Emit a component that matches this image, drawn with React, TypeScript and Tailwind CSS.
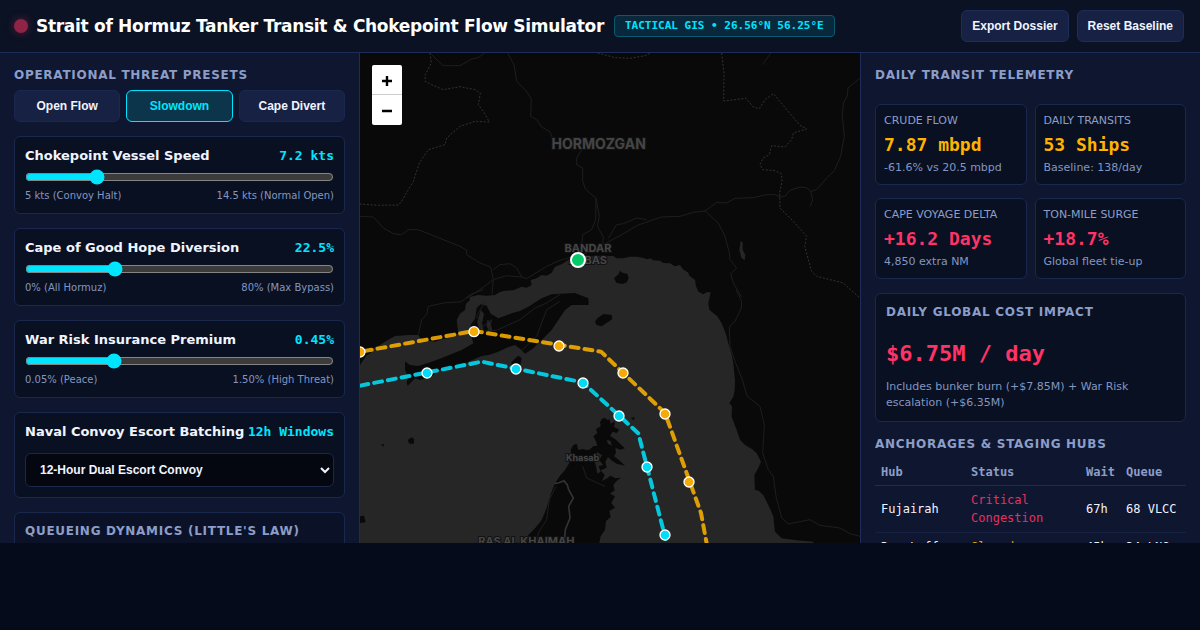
import { useState } from "react";

const headingClass = "text-[12px] leading-4 font-bold tracking-[0.06em] text-[#8c9ec8]";
const buttonClass =
  "h-8 rounded-md border font-['Liberation_Sans',Arial,sans-serif] text-[12px] font-bold cursor-pointer";

const presets = ["Open Flow", "Slowdown", "Cape Divert"];

const sliders = [
  {
    id: "speed",
    label: "Chokepoint Vessel Speed",
    min: 5,
    max: 15,
    step: 0.1,
    start: 7.2,
    format: (v: number) => `${v.toFixed(1)} kts`,
    low: "5 kts (Convoy Halt)",
    high: "14.5 kts (Normal Open)",
  },
  {
    id: "diversion",
    label: "Cape of Good Hope Diversion",
    min: 0,
    max: 80,
    step: 0.5,
    start: 22.5,
    format: (v: number) => `${v.toFixed(1)}%`,
    low: "0% (All Hormuz)",
    high: "80% (Max Bypass)",
  },
  {
    id: "premium",
    label: "War Risk Insurance Premium",
    min: 0.05,
    max: 1.5,
    step: 0.05,
    start: 0.45,
    format: (v: number) => `${v.toFixed(2)}%`,
    low: "0.05% (Peace)",
    high: "1.50% (High Threat)",
  },
];

const stats = [
  { name: "CRUDE FLOW", value: "7.87 mbpd", note: "-61.6% vs 20.5 mbpd", color: "text-[#ffb300]" },
  { name: "DAILY TRANSITS", value: "53 Ships", note: "Baseline: 138/day", color: "text-[#ffb300]" },
  { name: "CAPE VOYAGE DELTA", value: "+16.2 Days", note: "4,850 extra NM", color: "text-[#ff3366]" },
  { name: "TON-MILE SURGE", value: "+18.7%", note: "Global fleet tie-up", color: "text-[#ff3366]" },
];

const hubs = [
  { hub: "Fujairah", status: "Critical Congestion", wait: "67h", queue: "68 VLCC", color: "text-[#ff3366]" },
  { hub: "Ras Laffan", status: "Slowed", wait: "45h", queue: "34 LNG", color: "text-[#ffb300]" },
];

// ship positions, in chart units
const outbound = [[0, 897], [342, 836], [597, 879], [789, 960], [915, 1083], [987, 1287]];
const inbound = [[201, 960], [468, 948], [669, 990], [777, 1089], [861, 1242], [915, 1446]];

function Header() {
  return (
    <header className="flex h-[53px] shrink-0 items-center justify-between border-b border-[#1e2d58] bg-[#0a1224] pr-4 pl-3.5">
      <div className="flex items-center gap-2">
        <span className="size-3.5 rounded-full bg-[#8f2447] shadow-[0_0_10px_rgba(255,51,102,0.35)]" />
        <h1 className="text-[17px] leading-[27px] font-bold tracking-[-0.3px] whitespace-nowrap text-white">
          Strait of Hormuz Tanker Transit &amp; Chokepoint Flow Simulator
        </h1>
        <span className="ml-0.5 rounded-sm border border-[#075a70] bg-[#09283c] px-2.5 font-['DejaVu_Sans_Mono',monospace] text-[11px] leading-5 font-bold whitespace-nowrap text-[#00e5ff]">
          TACTICAL GIS • 26.56°N 56.25°E
        </span>
      </div>
      <div className="flex gap-2">
        <button className={`${buttonClass} border-[#1e2d58] bg-[#162144] px-2.5 text-[#f0f4ff]`}>Export Dossier</button>
        <button className={`${buttonClass} border-[#1e2d58] bg-[#162144] px-2.5 text-[#f0f4ff]`}>Reset Baseline</button>
      </div>
    </header>
  );
}

function SliderCard({ item }: { item: (typeof sliders)[number] }) {
  const [value, setValue] = useState(item.start);
  return (
    <div className="rounded-md border border-[#1a284e] bg-[#081022] p-2.5">
      <div className="flex items-center justify-between leading-[18px]">
        <label htmlFor={item.id} className="text-[13px] font-bold">
          {item.label}
        </label>
        <span className="font-['DejaVu_Sans_Mono',monospace] text-[13px] font-bold text-[#00e5ff]">
          {item.format(value)}
        </span>
      </div>
      <input
        id={item.id}
        type="range"
        min={item.min}
        max={item.max}
        step={item.step}
        value={value}
        onChange={(e) => setValue(Number(e.target.value))}
        className="mt-1 block h-4 w-full accent-[#00e5ff]"
      />
      <div className="mt-1 flex justify-between text-[10px] leading-[14px] text-[#8496c0]">
        <span>{item.low}</span>
        <span>{item.high}</span>
      </div>
    </div>
  );
}

function Controls() {
  const [active, setActive] = useState("Slowdown");
  return (
    <aside className="flex w-[360px] shrink-0 flex-col gap-3.5 overflow-y-auto border-r border-[#1e2d58] bg-[#0f162f] p-3.5 [scrollbar-width:none]">
      <section>
        <h2 className={headingClass}>OPERATIONAL THREAT PRESETS</h2>
        <div className="mt-[7px] grid grid-cols-3 gap-1.5">
          {presets.map((name) => (
            <button
              key={name}
              onClick={() => setActive(name)}
              className={`${buttonClass} ${
                active === name
                  ? "border-[#00e5ff] bg-[#0c354c] text-[#00e5ff]"
                  : "border-[#1a284e] bg-[#162144] text-[#f0f4ff]"
              }`}
            >
              {name}
            </button>
          ))}
        </div>
      </section>
      {sliders.map((item) => (
        <SliderCard key={item.id} item={item} />
      ))}
      <div className="rounded-md border border-[#1a284e] bg-[#081022] p-2.5">
        <div className="flex items-center justify-between leading-[18px]">
          <label htmlFor="convoy" className="text-[13px] font-bold whitespace-nowrap">
            Naval Convoy Escort Batching
          </label>
          <span className="font-['DejaVu_Sans_Mono',monospace] text-[13px] font-bold whitespace-nowrap text-[#00e5ff]">
            12h Windows
          </span>
        </div>
        <select
          id="convoy"
          className="mt-3 h-[34px] w-full rounded-md border border-[#1a284e] bg-[#04070f] px-2.5 font-['Liberation_Sans',Arial,sans-serif] text-[12px] font-bold text-[#f0f4ff]"
        >
          <option>12-Hour Dual Escort Convoy</option>
          <option>24-Hour Single Escort Convoy</option>
        </select>
      </div>
      <div className="h-40 shrink-0 rounded-md border border-[#1a284e] bg-[#0b1228] p-2.5">
        <h2 className={headingClass}>QUEUEING DYNAMICS (LITTLE'S LAW)</h2>
      </div>
    </aside>
  );
}

function ChartMap() {
  return (
    <section className="relative min-w-0 flex-1 overflow-hidden bg-[#090909]">
      <svg viewBox="0 0 1500 1470" preserveAspectRatio="xMidYMid slice" className="block size-full">
        <path
          fill="#262626"
          d="M0 936 20 906 32 900 44 882 60 876 82 862 105 849 145 846 175 846 185 861 225 866 250 858 275 851 295 841 290 801 300 782 315 771 318 752 330 741 328 732 355 726 380 728 405 726 420 717 435 713 460 712 485 701 500 704 515 696 512 681 530 676 545 666 560 668 575 659 585 641 605 634 625 621 650 616 675 611 720 608 760 609 770 616 790 616 810 611 830 611 850 615 862 619 870 616 880 622 900 623 910 630 930 631 944 640 960 636 968 648 985 659 988 668 1005 681 1008 700 1015 716 1030 724 1040 718 1052 718 1045 751 1048 770 1055 776 1072 790 1085 811 1096 838 1105 871 1114 900 1120 931 1125 981 1124 1010 1120 1031 1108 1051 1116 1060 1115 1091 1130 1131 1140 1160 1155 1176 1176 1188 1190 1201 1203 1226 1195 1245 1183 1266 1185 1311 1196 1313 1210 1326 1222 1350 1232 1371 1240 1390 1242 1411 1245 1436 1265 1456 1310 1462 1360 1466V1500H0Z"
        />
        {/* islands and the Musandam peninsula */}
        <g fill="#090909">
          <path d="M135 925 150 936 175 939 215 926 255 911 305 891 340 871 334 850 332 815 345 798 350 765 362 754 380 758 392 782 415 796 455 781 480 774 505 761 545 736 575 724 600 722 645 720 685 736 686 756 635 756 615 771 595 801 575 831 545 861 520 886 495 902 485 891 465 876 440 884 415 896 385 906 365 909 325 926 285 946 235 951 215 971 180 981 165 976 143 998 140 988 145 971 135 951Z" />
          <path d="M475 908 485 916 482 932 475 942 458 948 456 938 454 928 464 918Z" />
          <path d="M705 806 712 796 730 783 755 786 757 798 745 806 725 820 710 816Z" />
          <path d="M762 676 770 668 776 664 780 653 788 660 802 662 806 676 800 688 788 693 770 690Z" />
          <path d="M143 1162 150 1156 156 1153 162 1158 162 1172 148 1172ZM63 1175 72 1173 70 1181ZM0 1390 12 1388 17 1408 0 1410Z" />
          <path d="M500 1480 505 1446 525 1426 545 1401 558 1370 570 1331 578 1308 585 1291 600 1268 615 1251 628 1230 635 1211 632 1190 640 1176 650 1172 655 1191 668 1188 682 1192 694 1180 712 1178 708 1165 700 1150 712 1140 708 1128 722 1120 720 1106 730 1098 736 1108 748 1098 752 1112 765 1105 762 1122 778 1130 770 1140 758 1136 750 1148 768 1160 780 1172 795 1186 780 1190 766 1184 768 1200 762 1210 778 1222 795 1238 770 1232 754 1222 744 1212 736 1226 740 1244 722 1252 734 1266 726 1284 742 1276 752 1268 766 1276 782 1274 770 1284 760 1296 764 1312 750 1322 765 1330 754 1350 765 1364 748 1374 752 1392 738 1404 735 1430 722 1450 716 1480Z" />
          <path d="M722 1100 734 1094 750 1106 740 1112ZM812 1096 824 1092 822 1102ZM800 1108 808 1106 806 1114Z" />
        </g>
        <g fill="#262626">
          <path d="M700 1210 712 1198 726 1206 718 1222 730 1236 716 1240 722 1256 712 1262 708 1240ZM668 1176 690 1168 700 1180 688 1190 672 1188ZM740 1160 752 1164 756 1178 744 1172ZM352 806 362 770 372 782 366 812 372 836 356 826ZM382 800 392 806 396 830 388 838 380 820Z" />
          <path d="M1142 564 1148 568 1148 590 1156 606 1154 622 1144 614 1138 590Z" />
        </g>
        {/* roads */}
        <g fill="none" stroke="#1e1e1e" strokeWidth="3" strokeLinejoin="round">
          <path d="M215 5 235 25 250 38 300 38 335 18 355 14 380 -5M443 0 462 35 470 85 495 110 514 137 512 190 530 200 545 222 570 236 580 262 M665 290 650 315 650 335 668 345 668 385 676 408 708 436 707 500 695 530 668 545 665 575M708 436 718 490 712 520 730 552 728 575M0 490 40 492 70 525 100 542 125 545 145 530 175 530 240 556 300 580 320 592 320 605 360 630 392 642 400 680 396 725M320 735 360 710 400 680 440 668 485 672 500 677 560 640 600 622 680 600 730 575 780 548 830 518 880 500 905 492 960 490 1000 478 1035 474 1070 448 1100 450 1125 436 1180 434 1220 425 1245 425 1260 432" />
          <path d="M400 650 420 635 450 632 470 645 485 672M1035 474 1075 510 1095 550 1108 600 1110 620 1130 645 1112 662 1120 690 1145 732M745 556 770 515 790 512 830 495 860 500M1260 432 1275 430 1290 412 1320 402 1340 404 1352 415 1370 410 1400 375 1423 353 1442 310 1453 250 1447 190 1450 150 1462 128 1464 105 1500 75M1352 415 1358 440 1350 460M1208 35 1232 0" />
          <path d="M1128 710 1145 745 1144 765 1125 805 1108 822 1110 880 1125 925 1145 975 1162 1030 1200 1060 1213 1115 1208 1200 1225 1250 1240 1270 1248 1330 1265 1395 1285 1413 1350 1400 1380 1417 1440 1425 1470 1442 1500 1450M175 845 185 800 200 785 205 760 250 750 305 746 330 725 370 710M350 835 410 832 480 800 525 765 560 750 600 724M485 892 530 850 560 770 600 745M375 745 350 790 370 820 395 800 385 840M588 1300 568 1340 560 1400 535 1440 530 1480M668 1240 680 1275 735 1300" />
        </g>
        <path
          d="M583 1291 595 1290 612 1283 622 1296 626 1310 640 1335 626 1360 630 1395 616 1430 612 1480"
          fill="none" stroke="#333" strokeWidth="5"
        />
        {/* province borders */}
        <g fill="none" stroke="#333" strokeWidth="3" strokeDasharray="6 5">
          <path d="M210 0 214 30 196 65 195 85 215 95 250 110 300 101 345 110 361 120 355 155 370 175 388 207 345 205 300 220 260 255 255 275 205 290 178 330 160 385 145 410 125 445 115 456 55 457 0 453" />
          <path d="M713 0 765 14 810 16 855 8 880 -4M1085 0 1092 60 1091 144 1158 136 1180 162 1198 167 1215 140 1240 122 1320 217 1340 228 1300 240 1295 260 1275 282 1235 278 1228 305 1210 315 1200 335 1208 350 1245 353 1264 362 1266 385 1259 420 1260 465 1300 505 1340 550 1334 580 1345 620 1355 655 1370 670 1450 690 1500 735" />
        </g>
        <g
          fill="#454545" stroke="#121212" strokeWidth="6" paintOrder="stroke"
          textAnchor="middle" fontWeight="700" fontFamily="Inter, 'Open Sans', sans-serif"
        >
          <text x="716" y="288" fontSize="42">HORMOZGAN</text>
          <text x="684" y="598" fontSize="33">BANDAR</text>
          <text x="684" y="632" fontSize="33">ABBAS</text>
          <text x="668" y="1224" fontSize="27">Khasab</text>
          <text x="499" y="1475" fontSize="33">RAS AL KHAIMAH</text>
        </g>
        <g fill="none" strokeWidth="12" strokeLinecap="round" strokeLinejoin="round" strokeDasharray="24 18" opacity="0.85">
          <path stroke="#ffb300" d="M-30 902 342 834 723 896 915 1080 1023 1380 1047 1509" />
          <path stroke="#00e5ff" d="M-40 1006 365 926 668 988 835 1141 917 1458" />
        </g>
        <g stroke="#fff" strokeWidth="4">
          {outbound.map(([x, y]) => (
            <circle key={`${x}-${y}`} cx={x} cy={y} r="15" fill="#f5ab05" />
          ))}
          {inbound.map(([x, y]) => (
            <circle key={`${x}-${y}`} cx={x} cy={y} r="15" fill="#00dcf5" />
          ))}
          <circle cx="654" cy="621" r="21" strokeWidth="6" fill="#06c968" />
        </g>
      </svg>
      <div className="absolute top-3 left-3 flex w-[30px] flex-col overflow-hidden rounded-xs bg-white">
        <button aria-label="Zoom in" className="flex h-[30px] items-center justify-center border-b border-[#ccc] pt-0.5">
          <svg viewBox="0 0 12 12" className="size-3" stroke="#000" strokeWidth="2.4"><path d="M1 6H11M6 1V11" /></svg>
        </button>
        <button aria-label="Zoom out" className="flex h-[30px] items-center justify-center pt-0.5">
          <svg viewBox="0 0 12 12" className="size-3" stroke="#000" strokeWidth="2.4"><path d="M1 6H11" /></svg>
        </button>
      </div>
    </section>
  );
}

function Telemetry() {
  return (
    <aside className="flex w-[340px] shrink-0 flex-col overflow-y-auto border-l border-[#1e2d58] bg-[#0f162f] p-3.5 [scrollbar-width:none]">
      <h2 className={headingClass}>DAILY TRANSIT TELEMETRY</h2>
      <div className="mt-[21px] grid grid-cols-2 gap-x-2 gap-y-[13px]">
        {stats.map((s) => (
          <div key={s.name} className="rounded-md border border-[#1a284e] bg-[#081022] p-2 whitespace-nowrap">
            <div className="text-[11px] leading-4 text-[#8c9ec8]">{s.name}</div>
            <div className={`mt-1 font-['DejaVu_Sans_Mono',monospace] text-[18px] leading-6 font-bold ${s.color}`}>
              {s.value}
            </div>
            <div className="mt-[3px] text-[11px] leading-4 text-[#8496c0]">{s.note}</div>
          </div>
        ))}
      </div>
      <div className="mt-3.5 rounded-md border border-[#1a284e] bg-[#081022] p-2.5">
        <h2 className={headingClass}>DAILY GLOBAL COST IMPACT</h2>
        <div className="mt-5 font-['DejaVu_Sans_Mono',monospace] text-[22px] leading-7 font-bold text-[#ff3366]">
          $6.75M / day
        </div>
        <p className="mt-[11px] text-[11px] leading-4 text-[#8496c0]">
          Includes bunker burn (+$7.85M) + War Risk escalation (+$6.35M)
        </p>
      </div>
      <h2 className={`${headingClass} mt-3.5`}>ANCHORAGES &amp; STAGING HUBS</h2>
      <table className="mt-2 w-full table-fixed text-left font-['DejaVu_Sans_Mono',monospace] text-[12px]">
        <thead className="text-[#8c9ec8]">
          <tr className="border-b border-[#1e2d58] leading-4">
            <th className="w-[90px] px-1.5 pt-1 pb-[5px]">Hub</th>
            <th className="px-1.5 pt-1 pb-[5px]">Status</th>
            <th className="w-10 px-1.5 pt-1 pb-[5px]">Wait</th>
            <th className="w-[66px] px-1.5 pt-1 pb-[5px]">Queue</th>
          </tr>
        </thead>
        <tbody>
          {hubs.map((h) => (
            <tr key={h.hub} className="border-b border-[#172142] leading-[18px] whitespace-nowrap">
              <td className="px-1.5 py-[5px]">{h.hub}</td>
              <td className={`px-1.5 py-[5px] whitespace-normal opacity-90 ${h.color}`}>{h.status}</td>
              <td className="px-1.5 py-[5px]">{h.wait}</td>
              <td className="px-1.5 py-[5px]">{h.queue}</td>
            </tr>
          ))}
        </tbody>
      </table>
    </aside>
  );
}

export default function App() {
  return (
    <div className="min-h-screen bg-[#060b1c] font-['DejaVu_Sans',sans-serif] text-[#f0f4ff] scheme-dark">
      <div className="flex h-[calc(100vh-87px)] flex-col overflow-hidden">
        <Header />
        <main className="flex min-h-0 flex-1">
          <Controls />
          <ChartMap />
          <Telemetry />
        </main>
      </div>
    </div>
  );
}
